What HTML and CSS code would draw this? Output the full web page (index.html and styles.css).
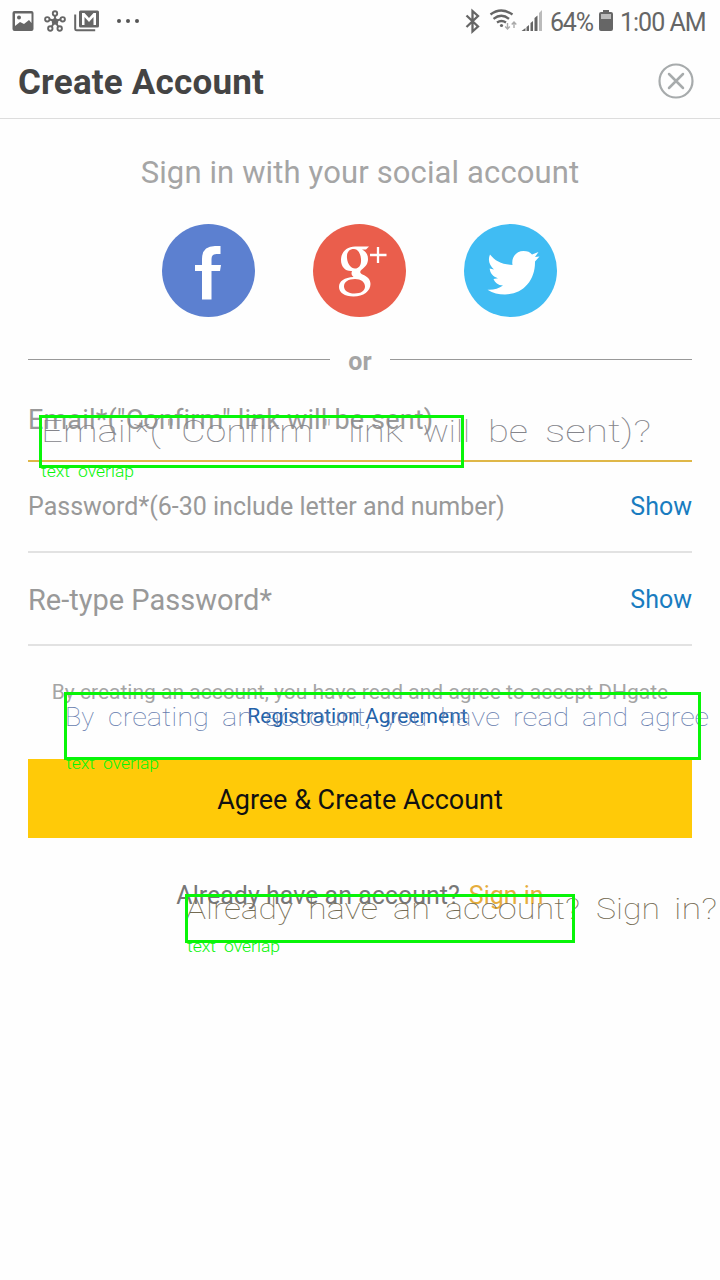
FILE: index.html
```html
<!DOCTYPE html>
<html lang="en">
<head>
<meta charset="utf-8">
<title>Create Account</title>
<link rel="stylesheet" href="styles.css">
</head>
<body>
<main class="screen">
  <div class="status">
    <svg class="status-left" width="150" height="44" viewBox="0 0 150 44">
      <path fill="#666" fill-rule="evenodd" d="M14.500 11h17q2 0 2 2v16q0 2-2 2h-17q-2 0-2-2v-16q0-2 2-2zM15 13.500v12.500l5-4 4 2 5-4 2.500 3v-9.500zM19 15.500a2 2 0 1 1 0 4a2 2 0 0 1 0-4z"/>
      <g fill="none" stroke="#666" stroke-width="1.900"><path d="M55 21V14M55 21L48 19M55 21L62 19M55 21L51 28M55 21L59 28"/><g fill="#fff"><circle cx="55" cy="13.500" r="2.200"/><circle cx="47.300" cy="19.300" r="2.200"/><circle cx="62.700" cy="19.300" r="2.200"/><circle cx="50.300" cy="28.500" r="2.200"/><circle cx="59.700" cy="28.500" r="2.200"/></g><circle cx="55" cy="21.500" r="2.300" fill="#666"/></g>
      <path d="M75.200 14.500v14.500q0 1.300 1.500 1.300h18.500" fill="none" stroke="#666" stroke-width="2"/>
      <rect x="79" y="10.500" width="20" height="17" rx="1.500" fill="#666"/>
      <path d="M82 25V13h2.500l4.500 5 4.500-5H96v12h-2.500v-8l-4.500 5-4.500-5v8z" fill="#fff"/>
      <g fill="#555"><circle cx="119" cy="21" r="2"/><circle cx="128" cy="21" r="2"/><circle cx="137" cy="21" r="2"/></g>
    </svg>
    <div class="status-right">
      <svg width="80" height="44" viewBox="464 0 80 44">
        <path d="M466.500 15.500l11.500 11-5.500 5V11l5.500 5-11.500 11" fill="none" stroke="#666" stroke-width="2.300"/>
        <g fill="none" stroke="#666" stroke-width="2.300"><path d="M490.500 14.500q10.500-8 22 0M493.500 18.800q8-6 15.500 0M497 22.500q4.500-3 9 0"/></g><circle cx="501.500" cy="25.500" r="1.600" fill="#666"/>
        <path d="M507.500 23v6m-2.300-2.500l2.300 2.500 2.300-2.500M514 28v-6m-2.300 2.500l2.300-2.500 2.300 2.500" fill="none" stroke="#aaa" stroke-width="1.400"/>
        <path fill="#666" d="M521.500 31l4-3v3zM526.500 27l2.500-2v6h-2.500zM530.500 23l2.500-2v10h-2.500zM534.500 18l3-2.500v15.500h-3z"/><path fill="#bbb" d="M539 13l3-3v21h-3z"/>
      </svg>
      <span class="battery-text">64%</span>
      <svg width="16" height="44" viewBox="0 0 16 44"><path fill="#666" d="M5 10h6v2h2q2 0 2 2v15q0 2-2 2h-10q-2 0-2-2v-15q0-2 2-2h2z"/><path fill="#bbb" d="M3 14h10v5h-10z"/></svg>
      <span class="clock">1:00 AM</span>
    </div>
  </div>
  <header class="header">
    <h1 class="title">Create Account</h1>
    <svg class="close" width="36" height="36" viewBox="0 0 36 36" fill="none" stroke="#a7abac"><circle cx="18" cy="18" r="16.500" stroke-width="2.200"/><path d="M11 11l14 14M25 11l-14 14" stroke-width="2.500" stroke-linecap="round"/></svg>
  </header>
  <section class="body">
    <p class="social-title"><span class="t-social">Sign in with your social account</span></p>
    <div class="socials">
      <svg width="93" height="93" viewBox="0 0 93 93"><circle cx="46.500" cy="46.500" r="46.500" fill="#5c80d0"/><path fill="#fff" d="M40 75.500V47h-7v-6h7v-6q0-13 13-13h5.500v8h-4q-5 0-5 5v6h9.500l-1 6h-8.500v28.500z"/></svg>
      <svg width="93" height="93" viewBox="0 0 93 93"><circle cx="46.500" cy="46.500" r="46.500" fill="#ea5e4c"/>
        <path fill="#fff" fill-rule="evenodd" d="M56 22.500l-3 3h-4c4 2 6 5 6 9.500 0 5-2.500 7.500-5.500 10-3 2.200-3 4 0 5.500 5 2 8 5 8 9.500 0 7-7 12.500-17 12.500-9 0-14.500-4-14.500-9.500 0-6 5.500-9.500 14.500-10-2-2-2.500-3.500-1.500-6-7 .5-11-4.500-11-11 0-8 6-13.500 14-13.500zM41 25c-5 0-7.500 3.500-7 9 .5 6 4 10.500 8 10.500s6.500-3.500 6-9.500c-.5-5.500-3-10-7-10zM42 55c-6.500 0-11 2.800-11 7.200 0 4.300 4 7.300 10.500 7.300 6.800 0 10.500-2.800 10.500-7 0-4.500-4-7.500-10-7.500z"/>
        <path d="M65 23v16M57 31h16.500" stroke="#fff" stroke-width="2.300"/></svg>
      <svg width="93" height="93" viewBox="0 0 93 93"><circle cx="46.500" cy="46.500" r="46.500" fill="#40bcf3"/><path fill="#fff" d="M26 30.500c5 6.500 12 10 22.500 10.500-1.500-8 4-14 11-14 4 0 6.500 1 8.500 3.500l6.500-2.500-3.500 5 4.500-.5-4.500 5c.5 19-12 33-30 33-6.500 0-12-1.500-17.500-4.800 6 .3 11.500-1.200 15.500-4.200-5 0-8-3-9.500-6.500l4.500-.8c-5-1.500-8-5-8.300-9.700l4.300 1c-4.500-4-6.500-9-4-15z"/></svg>
    </div>
    <div class="divider"><i class="rule"></i><span class="or">or</span><i class="rule"></i></div>
    <div class="field email"><span class="t-email">Email*("Confirm" link will be sent)</span></div>
    <div class="field password"><span class="t-pass">Password*(6-30 include letter and number)</span><a class="show">Show</a></div>
    <div class="field retype"><span class="t-retype">Re-type Password*</span><a class="show">Show</a></div>
    <div class="terms"><span class="t-terms">By creating an account, you have read and agree to accept DHgate</span><a class="agreement">Registration Agreement</a></div>
    <div class="submit"><span class="t-submit">Agree &amp; Create Account</span></div>
    <p class="signin"><span class="t-already">Already have an account?</span><a class="t-sign">Sign in</a></p>
  </section>
  <svg class="notes" width="720" height="1280" viewBox="0 0 720 1280">
    <g class="note-email">
      <text x="41" y="442" textLength="120" lengthAdjust="spacingAndGlyphs">Email*(</text><text x="166" y="442">"</text><text x="181" y="442" textLength="132" lengthAdjust="spacingAndGlyphs">Confirm</text><text x="323" y="442">"</text><text x="348" y="442" textLength="55" lengthAdjust="spacingAndGlyphs">link</text><text x="423" y="442" textLength="47" lengthAdjust="spacingAndGlyphs">will</text><text x="488" y="442" textLength="40" lengthAdjust="spacingAndGlyphs">be</text><text x="545" y="442" textLength="106" lengthAdjust="spacingAndGlyphs">sent)?</text>
    </g>
    <g class="note-terms">
      <text x="65" y="726" textLength="29" lengthAdjust="spacingAndGlyphs">By</text><text x="108" y="726" textLength="101" lengthAdjust="spacingAndGlyphs">creating</text><text x="222" y="726" textLength="31" lengthAdjust="spacingAndGlyphs">an</text><text x="265" y="726" textLength="106" lengthAdjust="spacingAndGlyphs">account,</text><text x="384" y="726" textLength="43" lengthAdjust="spacingAndGlyphs">you</text><text x="440" y="726" textLength="60" lengthAdjust="spacingAndGlyphs">have</text><text x="513" y="726" textLength="56" lengthAdjust="spacingAndGlyphs">read</text><text x="582" y="726" textLength="46" lengthAdjust="spacingAndGlyphs">and</text><text x="640" y="726" textLength="69" lengthAdjust="spacingAndGlyphs">agree</text>
    </g>
    <g class="note-signin">
      <text x="186" y="919" textLength="107" lengthAdjust="spacingAndGlyphs">Already</text><text x="308" y="919" textLength="70" lengthAdjust="spacingAndGlyphs">have</text><text x="393" y="919" textLength="37" lengthAdjust="spacingAndGlyphs">an</text><text x="445" y="919" textLength="135" lengthAdjust="spacingAndGlyphs">account?</text><text x="596" y="919" textLength="64" lengthAdjust="spacingAndGlyphs">Sign</text><text x="674" y="919" textLength="43" lengthAdjust="spacingAndGlyphs">in?</text>
    </g>
    <g fill="none" stroke="#08f508" stroke-width="3"><rect x="40.500" y="416.500" width="422" height="50"/><rect x="65.500" y="693.500" width="634" height="65"/><rect x="186.500" y="895.500" width="387" height="46"/></g>
    <g class="note-label">
      <text x="41" y="477" textLength="29" lengthAdjust="spacingAndGlyphs">text</text><text x="78" y="477" textLength="56" lengthAdjust="spacingAndGlyphs">overlap</text>
      <text x="66" y="769" textLength="29" lengthAdjust="spacingAndGlyphs">text</text><text x="103" y="769" textLength="56" lengthAdjust="spacingAndGlyphs">overlap</text>
      <text x="187" y="952" textLength="29" lengthAdjust="spacingAndGlyphs">text</text><text x="224" y="952" textLength="56" lengthAdjust="spacingAndGlyphs">overlap</text>
    </g>
  </svg>
</main>
</body>
</html>
```
FILE: styles.css
```css
* { box-sizing: border-box; }
body { margin: 0; font-family: Roboto, sans-serif; background: #fefefe; }
h1, p { margin: 0; }
span, a { white-space: nowrap; }
.screen { position: relative; width: 720px; height: 1280px; overflow: hidden; background: #fefefe; }
.status { display: flex; justify-content: space-between; height: 44px; }
.status-right { display: flex; width: 256px; line-height: 45px; color: #666; }
.battery-text { width: 48px; margin: 0 0 0 6px; font-size: 25px; letter-spacing: -1.200px; }
.status-right svg { flex: none; }
.clock { margin-left: 6px; font-size: 25px; letter-spacing: -1px; }
.header { display: flex; justify-content: space-between; height: 75px; padding: 18px 26px 0 18px; border-bottom: 1px solid #ddd; }
.close { margin-top: 1px; }
.title { font-size: 35px; line-height: 41px; font-weight: 700; letter-spacing: .2px; color: #444; }
.body { padding: 0 28px; }
.social-title { height: 105px; padding-top: 35px; text-align: center; font-size: 31px; line-height: 38px; letter-spacing: .13px; color: #a5a5a5; }
.socials { display: flex; justify-content: center; gap: 58px; height: 93px; padding-right: 2px; }
.divider { display: flex; align-items: center; gap: 18px; height: 85px; }
.rule { flex: 1; height: 1px; background: #999; }
.or { font-size: 25px; font-weight: 700; line-height: 30px; color: #a5a5a5; padding-top: 5px; }
.field { display: flex; justify-content: space-between; border-bottom: 2px solid #e2e2e2; color: #999; line-height: 30px; }
.email { height: 60px; padding-top: 3px; border-color: #dfb748; font-size: 27px; letter-spacing: .16px; }
.password { height: 91px; padding-top: 30px; font-size: 25px; }
.retype { height: 93px; padding-top: 32px; font-size: 29px; }
.show { font-size: 25px; color: #197cc0; }
.terms { display: flex; flex-direction: column; align-items: center; height: 113px; padding-top: 34px; font-size: 21px; line-height: 24px; color: #a5a5a5; }
.agreement { margin-right: 5px; color: #2362a8; }
.submit { display: flex; justify-content: center; height: 79px; background: #ffca08; padding-top: 24px; font-size: 27px; line-height: 34px; color: #111; }
.signin { display: flex; justify-content: center; gap: 9px; padding-top: 43px; font-size: 25px; line-height: 30px; color: #777; }
.t-sign { color: #e6ad3c; }
.notes { position: absolute; left: 0; top: 0; font-family: Roboto, sans-serif; font-weight: 100; }
.note-email { font-size: 32px; fill: #85858b; }
.note-terms { font-size: 25px; fill: #657bad; }
.note-signin { font-size: 29px; fill: #746b52; }
.note-label { font-size: 16px; font-weight: 300; fill: #08f508; }
```
